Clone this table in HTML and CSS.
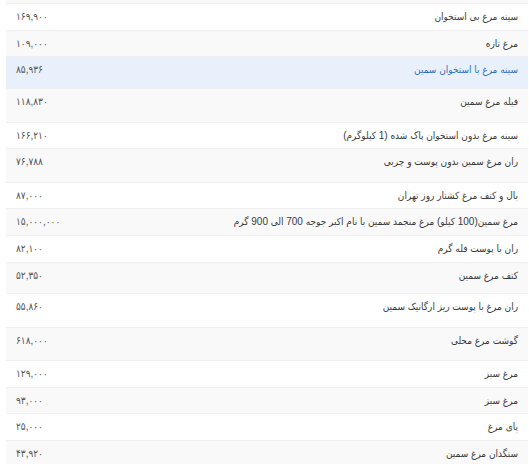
FILE: index.html
```html
<!DOCTYPE html>
<html lang="fa" dir="rtl">
<head>
<meta charset="utf-8">
<title>قیمت مرغ</title>
<link rel="stylesheet" href="styles.css">
</head>
<body>
<div class="wrap">
<table class="prices">
<tbody>
<tr class="stub"><td></td><td></td></tr>
<tr class="h27"><td class="name">سینه مرغ بی استخوان</td><td class="price">۱۶۹,۹۰۰</td></tr>
<tr class="h26"><td class="name">مرغ تازه</td><td class="price">۱۰۹,۰۰۰</td></tr>
<tr class="h32 active"><td class="name"><a href="#">سینه مرغ با استخوان سمین</a></td><td class="price">۸۵,۹۳۶</td></tr>
<tr class="h34"><td class="name">فیله مرغ سمین</td><td class="price">۱۱۸,۸۳۰</td></tr>
<tr class="h26"><td class="name">سینه مرغ بدون استخوان پاک شده (1 کیلوگرم)</td><td class="price">۱۶۶,۲۱۰</td></tr>
<tr class="h34"><td class="name">ران مرغ سمین بدون پوست و چربی</td><td class="price">۷۶,۷۸۸</td></tr>
<tr class="h26"><td class="name">بال و کتف مرغ کشتار روز تهران</td><td class="price">۸۷,۰۰۰</td></tr>
<tr class="h27"><td class="name">مرغ سمین(100 کیلو) مرغ منجمد سمین با نام اکبر جوجه 700 الی 900 گرم</td><td class="price">۱۵,۰۰۰,۰۰۰</td></tr>
<tr class="h27"><td class="name">ران با پوست فله گرم</td><td class="price">۸۲,۱۰۰</td></tr>
<tr class="h31"><td class="name">کتف مرغ سمین</td><td class="price">۵۲,۳۵۰</td></tr>
<tr class="h34"><td class="name">ران مرغ با پوست ریز ارگانیک سمین</td><td class="price">۵۵,۸۶۰</td></tr>
<tr class="h33"><td class="name">گوشت مرغ محلی</td><td class="price">۶۱۸,۰۰۰</td></tr>
<tr class="h27"><td class="name">مرغ سبز</td><td class="price">۱۲۹,۰۰۰</td></tr>
<tr class="h26"><td class="name">مرغ سبز</td><td class="price">۹۳,۰۰۰</td></tr>
<tr class="h27"><td class="name">پای مرغ</td><td class="price">۲۵,۰۰۰</td></tr>
<tr class="h27"><td class="name">سنگدان مرغ سمین</td><td class="price">۴۳,۹۲۰</td></tr>
</tbody>
</table>
</div>
</body>
</html>
```

FILE: styles.css
```css
html, body {
  margin: 0;
  padding: 0;
  background: #ffffff;
}

body {
  font-family: "Liberation Sans", "DejaVu Sans Condensed", "DejaVu Sans", sans-serif;
  font-size: 10px;
  color: #3a3a3a;
}

.wrap {
  padding: 0 1px 0 6px;
  direction: rtl;
}

.prices {
  width: 522px;
  border-collapse: collapse;
  direction: rtl;
}

.prices td {
  padding: 6px 10px 0 10px;
  line-height: 14px;
  vertical-align: top;
  border-top: 1px solid #eef0f2;
  white-space: nowrap;
}

.prices tr:nth-child(odd) td {
  background: #f9f9fa;
}

.prices tr:nth-child(even) td {
  background: #ffffff;
}

.prices tr.active td {
  background: #e8f1fb;
}

.prices .stub td {
  height: 3px;
  padding: 0;
  border-top: 0;
}

.prices .name {
  text-align: right;
}

.prices .price {
  text-align: left;
  width: 120px;
  color: #555555;
}

.prices a {
  color: #2f6fb8;
  text-decoration: none;
}

.h26 td { height: 19px; }
.h27 td { height: 20px; }
.h31 td { height: 24px; }
.h32 td { height: 25px; }
.h33 td { height: 26px; }
.h34 td { height: 27px; }
```
